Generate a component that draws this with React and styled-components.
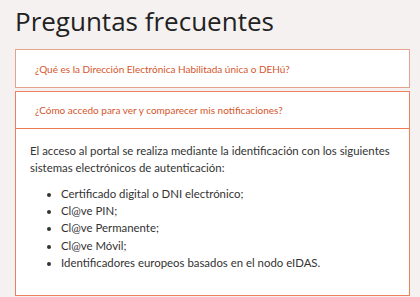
import React from "react";
import styled, { createGlobalStyle } from "styled-components";

const Global = createGlobalStyle`
  html, body { margin: 0; padding: 0; background: #f5f1f0; }
  body { font-family: "Segoe UI", "Open Sans", "Noto Sans", sans-serif; color: #333; }
`;

const Page = styled.main`
  padding: 5px 10px 0 15px;
`;

const Title = styled.h1`
  margin: 0 0 11px 0;
  font-family: "Segoe UI", "Open Sans", sans-serif;
  font-size: 26px;
  font-weight: 400;
  line-height: 33px;
  color: #222;
`;

const List = styled.div`
  display: flex;
  flex-direction: column;
  gap: 3px;
`;

const Item = styled.section`
  background: #fff;
  border: 1px solid ${(p) => (p.$open ? "#ee8060" : "#e3a38c")};
`;

const Header = styled.button`
  display: flex;
  align-items: center;
  width: 100%;
  height: 37px;
  padding: 0 0 0 19px;
  border: 0;
  border-bottom: ${(p) => (p.$open ? "1px solid #ee7a52" : "0")};
  background: transparent;
  font-family: "Segoe UI", Lato, sans-serif;
  font-size: 10px;
  color: #d5552b;
  text-align: left;
  cursor: pointer;
`;

const Body = styled.div`
  padding: 13px 4px 24px 14px;
  font-family: "Segoe UI", Lato, sans-serif;
  font-size: 11.4px;
  line-height: 17px;
  color: #333;
`;

const Para = styled.p`
  margin: 0 0 9px 0;
`;

const Bullets = styled.ul`
  margin: 0;
  padding-left: 31px;
  list-style: disc;
  li { line-height: 17.2px; }
`;

export default function App() {
  return (
    <>
      <Global />
      <Page>
        <Title>Preguntas frecuentes</Title>
        <List>
          <Item>
            <Header>¿Qué es la Dirección Electrónica Habilitada única o DEHú?</Header>
          </Item>
          <Item $open>
            <Header $open>¿Cómo accedo para ver y comparecer mis notificaciones?</Header>
            <Body>
              <Para>
                El acceso al portal se realiza mediante la identificación con los siguientes
                sistemas electrónicos de autenticación:
              </Para>
              <Bullets>
                <li>Certificado digital o DNI electrónico;</li>
                <li>Cl@ve PIN;</li>
                <li>Cl@ve Permanente;</li>
                <li>Cl@ve Móvil;</li>
                <li>Identificadores europeos basados en el nodo eIDAS.</li>
              </Bullets>
            </Body>
          </Item>
        </List>
      </Page>
    </>
  );
}
